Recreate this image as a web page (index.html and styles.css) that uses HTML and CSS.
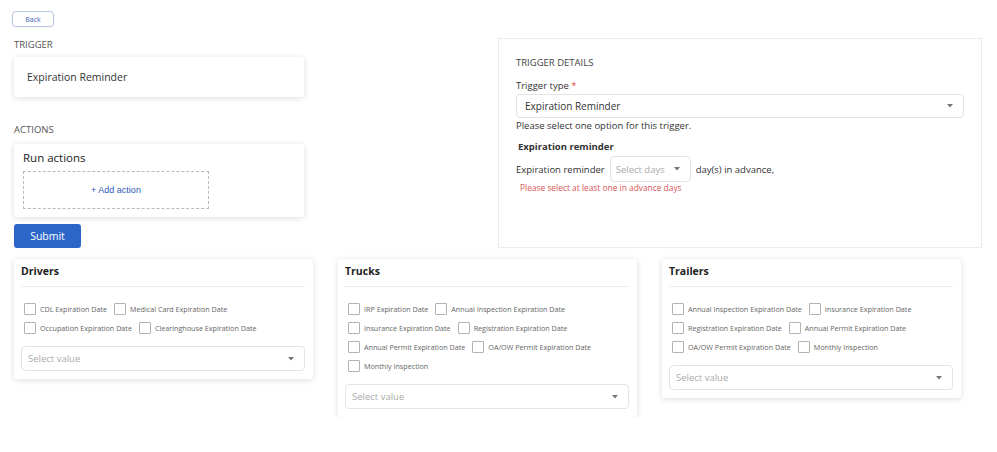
FILE: index.html
```html
<!DOCTYPE html>
<html>
<head>
<meta charset="utf-8">
<link rel="stylesheet" href="styles.css">
</head>
<body>
<div class="page">
  <button class="back">Back</button>
  <div class="top">
    <div class="left">
      <div class="section-label">TRIGGER</div>
      <div class="card trigger-card">Expiration Reminder</div>
      <div class="section-label actions-label">ACTIONS</div>
      <div class="card actions-card">
        <div class="run-title">Run actions</div>
        <div class="add-box">+ Add action</div>
      </div>
      <button class="submit">Submit</button>
    </div>
    <div class="details">
      <div class="details-title">TRIGGER DETAILS</div>
      <div class="field-label">Trigger type <span class="req">*</span></div>
      <div class="select big">
        <span>Expiration Reminder</span>
        <svg class="caret" width="6" height="4" viewBox="0 0 6 4"><path d="M0 0h6L3 3.5z" fill="#777"/></svg>
      </div>
      <div class="hint">Please select one option for this trigger.</div>
      <div class="sub-title">Expiration reminder</div>
      <div class="days-row">
        <span>Expiration reminder</span>
        <div class="select days">
          <span class="ph">Select days</span>
          <svg class="caret" width="6" height="4" viewBox="0 0 6 4"><path d="M0 0h6L3 3.5z" fill="#777"/></svg>
        </div>
        <span>day(s) in advance,</span>
      </div>
      <div class="error">Please select at least one in advance days</div>
    </div>
  </div>
  <div class="groups">
    <div class="card group">
      <div class="group-title">Drivers</div>
      <div class="checks">
        <label class="chk"><span class="box"></span>CDL Expiration Date</label>
        <label class="chk"><span class="box"></span>Medical Card Expiration Date</label>
        <label class="chk"><span class="box"></span>Occupation Expiration Date</label>
        <label class="chk"><span class="box"></span>Clearinghouse Expiration Date</label>
      </div>
      <div class="select value">
        <span class="ph">Select value</span>
        <svg class="caret" width="6" height="4" viewBox="0 0 6 4"><path d="M0 0h6L3 3.5z" fill="#777"/></svg>
      </div>
    </div>
    <div class="card group">
      <div class="group-title">Trucks</div>
      <div class="checks">
        <label class="chk"><span class="box"></span>IRP Expiration Date</label>
        <label class="chk"><span class="box"></span>Annual Inspection Expiration Date</label>
        <label class="chk"><span class="box"></span>Insurance Expiration Date</label>
        <label class="chk"><span class="box"></span>Registration Expiration Date</label>
        <label class="chk"><span class="box"></span>Annual Permit Expiration Date</label>
        <label class="chk"><span class="box"></span>OA/OW Permit Expiration Date</label>
        <label class="chk"><span class="box"></span>Monthly Inspection</label>
      </div>
      <div class="select value">
        <span class="ph">Select value</span>
        <svg class="caret" width="6" height="4" viewBox="0 0 6 4"><path d="M0 0h6L3 3.5z" fill="#777"/></svg>
      </div>
    </div>
    <div class="card group">
      <div class="group-title">Trailers</div>
      <div class="checks">
        <label class="chk"><span class="box"></span>Annual Inspection Expiration Date</label>
        <label class="chk"><span class="box"></span>Insurance Expiration Date</label>
        <label class="chk"><span class="box"></span>Registration Expiration Date</label>
        <label class="chk"><span class="box"></span>Annual Permit Expiration Date</label>
        <label class="chk"><span class="box"></span>OA/OW Permit Expiration Date</label>
        <label class="chk"><span class="box"></span>Monthly Inspection</label>
      </div>
      <div class="select value">
        <span class="ph">Select value</span>
        <svg class="caret" width="6" height="4" viewBox="0 0 6 4"><path d="M0 0h6L3 3.5z" fill="#777"/></svg>
      </div>
    </div>
  </div>
</div>
</body>
</html>
```
FILE: styles.css
```css
* { box-sizing: border-box; }
body {
  margin: 0;
  background: #fff;
  font-family: "Open Sans", "Noto Sans", sans-serif;
  color: #333;
}
.page { padding: 11px 15px 0 14px; }
.back {
  display: block;
  margin-left: -2px;
  width: 42px;
  height: 16px;
  padding: 0;
  background: #fff;
  border: 1px solid #b9c6e4;
  border-radius: 4px;
  box-shadow: 0 1px 2px rgba(0, 0, 0, 0.06);
  font-family: inherit;
  font-size: 7px;
  color: #3b62b5;
}
.top {
  display: grid;
  grid-template-columns: 290px 484px;
  justify-content: space-between;
  margin-top: 11px;
}
.section-label {
  margin-top: 1px;
  height: 18px;
  line-height: 12px;
  font-size: 9.5px;
  color: #555;
}
.card {
  background: #fff;
  border-radius: 3px;
  box-shadow: 0 1px 6px rgba(0, 0, 0, 0.14);
}
.trigger-card {
  height: 40px;
  padding-left: 13px;
  display: flex;
  align-items: center;
  font-size: 10.5px;
  color: #333;
}
.actions-label { margin-top: 27px; }
.actions-label.section-label { height: 20px; }
.actions-card {
  height: 73px;
  padding: 7px 9px;
}
.run-title { font-size: 11.5px; color: #222; line-height: 14px; }
.add-box {
  margin-top: 6px;
  width: 186px;
  height: 38px;
  border: 1px dashed #bbb;
  display: flex;
  align-items: center;
  justify-content: center;
  font-family: "Liberation Sans", Arial, sans-serif;
  font-size: 9px;
  color: #2d5cb8;
}
.submit {
  display: block;
  margin-top: 7px;
  width: 67px;
  height: 24px;
  border: 0;
  border-radius: 3px;
  background: #2d66c9;
  color: #fff;
  font-family: inherit;
  font-size: 10.5px;
  padding: 0;
}
.details {
  border: 1px solid #ececec;
  height: 210px;
  padding: 17px 17px 0 17px;
}
.details-title { font-size: 9.5px; color: #444; line-height: 13px; }
.field-label { margin-top: 11px; font-size: 9.5px; color: #333; line-height: 12px; }
.req { color: #e04848; }
.select {
  display: flex;
  align-items: center;
  justify-content: space-between;
  border: 1px solid #e4e4e4;
  border-radius: 4px;
  background: #fff;
}
.select.big {
  margin-top: 2px;
  height: 24px;
  padding: 0 10px 0 8px;
  font-size: 10px;
  color: #333;
}
.hint { margin-top: 1px; font-size: 9.5px; color: #333; line-height: 14px; }
.sub-title { margin-top: 7px; margin-left: 2px; font-size: 9.5px; font-weight: 700; color: #333; line-height: 13px; }
.days-row {
  margin-top: 3px;
  display: flex;
  align-items: center;
  font-size: 9.5px;
  color: #333;
}
.select.days {
  width: 81px;
  height: 26px;
  margin: 0 5px 0 5px;
  padding: 0 10px 0 5px;
  font-size: 9.5px;
}
.ph { color: #aaa; }
.error {
  margin-top: 0;
  margin-left: 4px;
  font-size: 8.4px;
  color: #d65656;
}
.groups {
  margin-top: 11px;
  display: grid;
  grid-template-columns: repeat(3, 299px);
  column-gap: 25px;
  align-items: start;
}
.group { padding: 5px 8px 8px 7px; }
.group-title {
  font-size: 10.5px;
  font-weight: 700;
  color: #222;
  height: 23px;
  line-height: 14px;
  border-bottom: 1px solid #ebebeb;
}
.checks {
  display: flex;
  flex-wrap: wrap;
  padding: 16px 0 0 3px;
  row-gap: 7px;
  column-gap: 7px;
}
.chk {
  display: flex;
  align-items: center;
  gap: 4px;
  height: 12px;
  font-size: 7.2px;
  color: #666;
  flex: 0 0 auto;
}
.box {
  width: 12px;
  height: 12px;
  border: 1px solid #b3b3b3;
  border-radius: 1px;
  background: #fff;
}
.select.value {
  margin-top: 12px;
  height: 25px;
  padding: 0 10px 0 6px;
  font-size: 9.5px;
}
```
